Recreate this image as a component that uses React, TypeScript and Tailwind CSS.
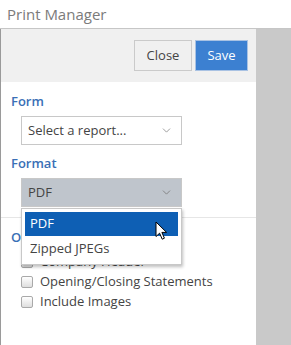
import { ChevronDown } from "lucide-react";

function Check({ label }: { label: string }) {
    return (
        <label className="flex items-center gap-[7px] h-[20px] text-[13px] text-[#444]">
            <span className="w-[12px] h-[12px] rounded-[2px] border border-[#a9a9a9] bg-gradient-to-b from-white to-[#dedede] shrink-0" />
            {label}
        </label>
    );
}

export default function App() {
    return (
        <div
            className="w-[291px] h-[345px] bg-[#c9c9c9] flex flex-col overflow-hidden"
            style={{ fontFamily: '"Open Sans", "Liberation Sans", sans-serif' }}
        >
            <div className="h-[29px] shrink-0 bg-white border-b border-[#c6c6c6] px-[7px] flex items-center text-[15px] text-[#7b7b7b]">
                Print Manager
            </div>
            <div className="flex-1 flex">
                <div className="w-[256px] bg-white border-l border-[#9a9a9a] flex flex-col">
                    <div className="h-[53px] bg-[#f0f0f0] flex justify-end items-center gap-[3px] pr-[8px]">
                        <button className="w-[58px] h-[31px] border border-[#cacaca] bg-[#f0f0f0] text-[13px] text-[#444]">
                            Close
                        </button>
                        <button className="w-[53px] h-[31px] border border-[#a9c2e3] bg-[#3c80d1] text-[13px] text-white">
                            Save
                        </button>
                    </div>

                    <div className="pt-[10px] pl-[10px] pr-[74px]">
                        <div className="h-[18px] text-[13px] font-semibold text-[#3a6fb6] leading-[18px]">Form</div>
                        <div className="mt-[6px] ml-[10px] h-[29px] border border-[#c8c8c8] bg-white flex items-center justify-between pl-[6px] pr-[8px] text-[13px] text-[#444]">
                            Select a report...
                            <ChevronDown size={13} strokeWidth={1.5} className="text-[#888]" />
                        </div>

                        <div className="mt-[9px] h-[18px] text-[13px] font-semibold text-[#3a6fb6] leading-[18px]">Format</div>
                        <div className="relative mt-[6px] ml-[10px]">
                            <div className="h-[29px] border border-[#c8c8c8] bg-[#bfc5cc] flex items-center justify-between pl-[6px] pr-[8px] text-[13px] text-[#444]">
                                PDF
                                <ChevronDown size={13} strokeWidth={1.5} className="text-[#777]" />
                            </div>
                            <div className="absolute z-10 left-0 top-full mt-[1px] w-[161px] bg-white border border-[#c8c8c8] shadow-[1px_2px_3px_rgba(0,0,0,0.25)] p-[3px] text-[13px]">
                                <div className="h-[24px] bg-[#0e5fb4] text-white flex items-center pl-[5px]">PDF</div>
                                <div className="h-[25px] text-[#444] flex items-center pl-[5px]">Zipped JPEGs</div>
                                <svg
                                    className="absolute left-[133px] top-[12px]"
                                    width="13"
                                    height="20"
                                    viewBox="0 0 13 20"
                                >
                                    <path
                                        d="M1 1 L1 15.5 L4.6 12.2 L7.2 18.2 L9.4 17.2 L6.9 11.4 L11.6 11.4 Z"
                                        fill="white"
                                        stroke="black"
                                        strokeWidth="1"
                                        strokeLinejoin="round"
                                    />
                                </svg>
                            </div>
                        </div>
                    </div>

                    <div className="mt-[10px] border-t border-[#e6e6e6] pt-[10px] pl-[10px]">
                        <div className="h-[18px] text-[13px] font-semibold text-[#3a6fb6] leading-[18px]">Options</div>
                        <div className="mt-[6px] ml-[10px] flex flex-col">
                            <Check label="Company Header" />
                            <Check label="Opening/Closing Statements" />
                            <Check label="Include Images" />
                        </div>
                    </div>
                </div>
            </div>
        </div>
    );
}
